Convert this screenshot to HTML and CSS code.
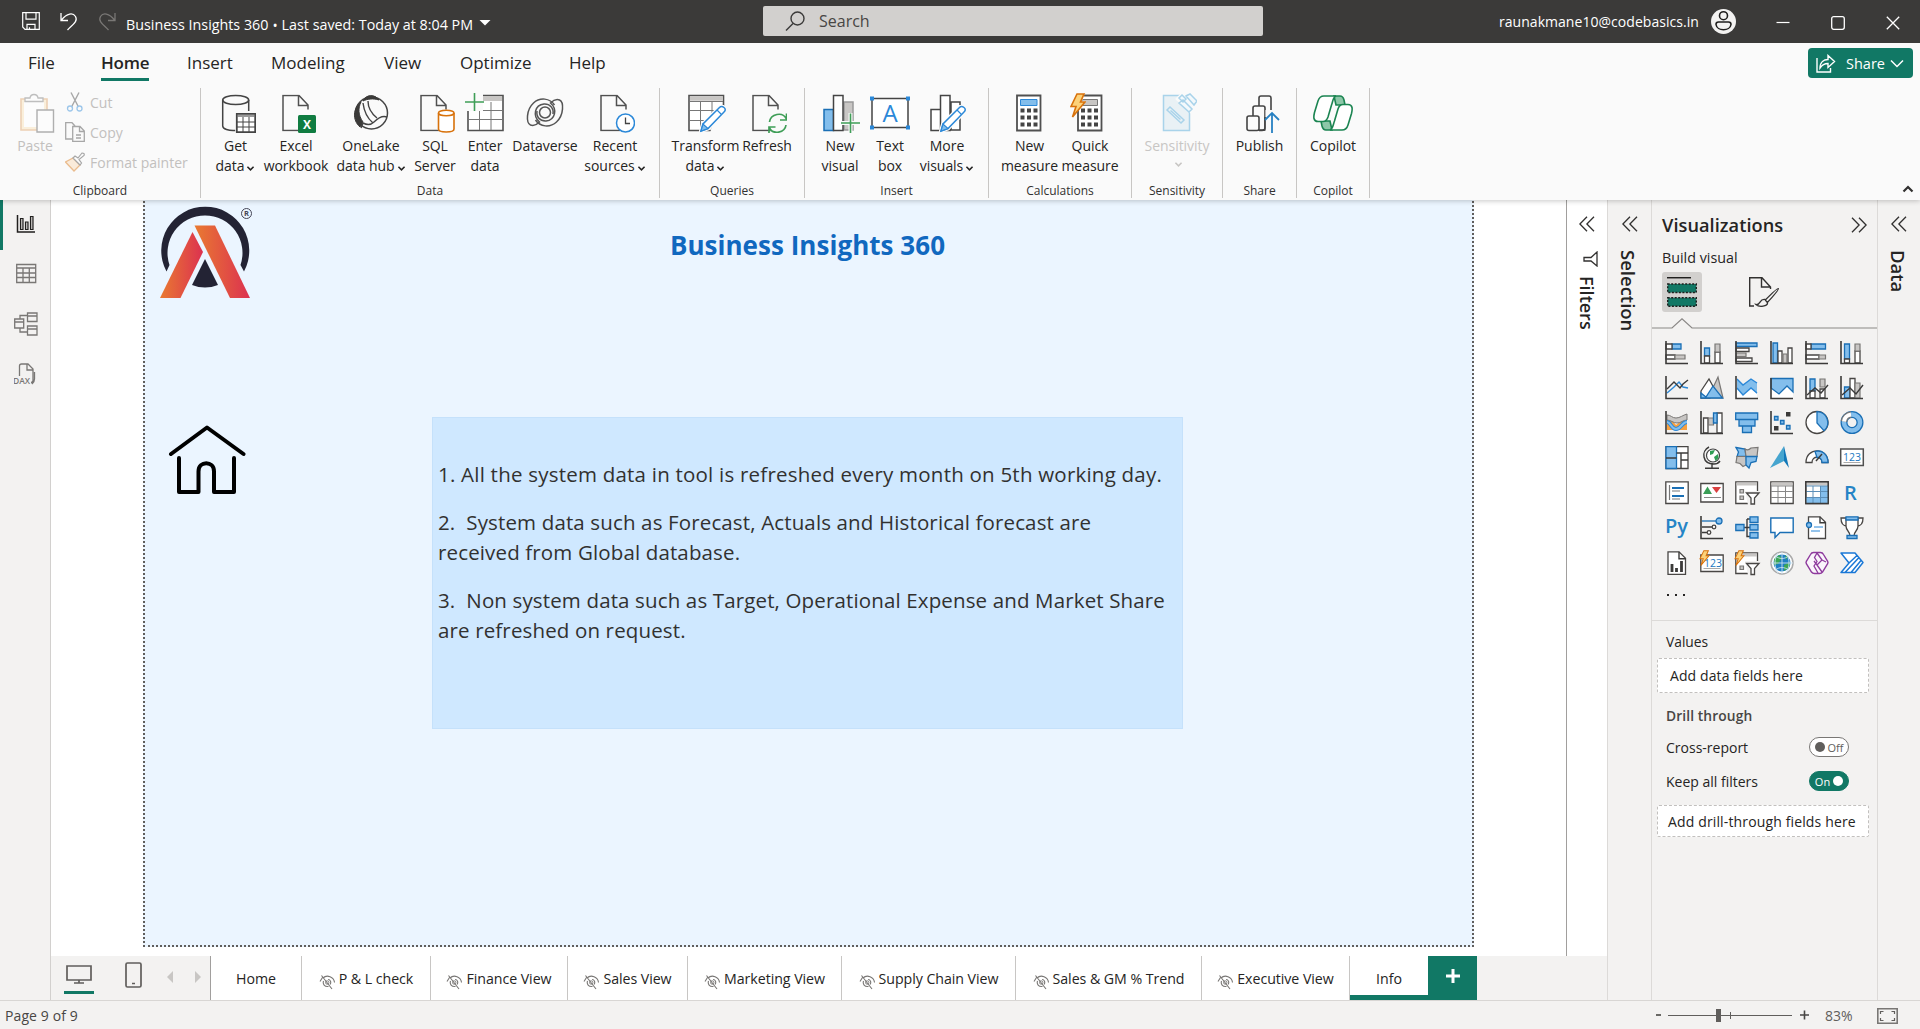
FILE: index.html
```html
<!DOCTYPE html>
<html lang="en">
<head>
<meta charset="utf-8">
<title>Business Insights 360</title>
<link rel="stylesheet" href="styles.css">
</head>
<body>
<svg class="defs" width="0" height="0">
  <symbol id="chev" viewBox="0 0 10 8"><path d="M1.500 2 5 5.500 8.500 2" fill="none" stroke="currentColor" stroke-width="1.800"/></symbol>
  <symbol id="dbl" viewBox="0 0 16 16"><path d="M8 .8.9 8 8 15.200M15 .8 7.900 8 15 15.200" fill="none" stroke="#323130" stroke-width="1.300"/></symbol>
  <symbol id="eye" viewBox="0 0 16 16"><path d="M1 7.500 3.500 3.500M4 4C8 0 15 3 15.500 8.500M2.500 1.500 13 15M4.500 7c-1 3 1 6 5 5.500M9 5.500c2.500 0 3.500 3 2 5" fill="none" stroke="#797775" stroke-width="1.100"/><circle cx="8.200" cy="8.500" r="1.700" fill="none" stroke="#797775" stroke-width=".9"/></symbol>
  <symbol id="page" viewBox="0 0 28 37"><path d="M1 1h16l9 9.500V36H1z" fill="#fafafa" stroke="none"/><path d="M20 36H1V1h16l9 9.500V15M16.500 1v10H26" fill="none" stroke="#505050" stroke-width="1.500"/></symbol>
  <symbol id="pencil" viewBox="0 0 28 28"><path d="M2 26 4 19 20.500 2.500q2-2 4.500 0t0 4.500L9 23.500z" fill="#fafafa" stroke="#fafafa" stroke-width="4"/><path d="M2 26 4 19 20.500 2.500q2-2 4.500 0t0 4.500L9 23.500z" fill="#fff" stroke="#2b88d8" stroke-width="1.500"/><path d="M2 26 4 19l5 4.500zM18 5l4.500 4.500" fill="#83beec" stroke="#2b88d8" stroke-width="1.200"/></symbol>
  <symbol id="bolt" viewBox="0 0 16 25"><path d="M7 1h7l-3.500 8H15L2.500 24 6 13.500H1z" fill="#fcd27a" stroke="#d8720c" stroke-width="1.600"/></symbol>
</svg>

<header class="titlebar">
  <div class="quick">
    <svg width="18" height="18" viewBox="0 0 18 18"><path d="M.7.7h16.600v16.600H3L.7 15zM4 .7v6.500h10V.7M5 17.300v-5h8v5M7.500 17.300v-2" fill="none" stroke="#fff" stroke-width="1.200"/></svg>
    <svg width="18" height="19" viewBox="0 0 18 19"><path d="M1 1v7.500h7M1.500 8C7 1 13 .5 15.500 4.500c3 5-4 9-8 13.500" fill="none" stroke="#fff" stroke-width="1.300"/></svg>
    <svg width="18" height="19" viewBox="0 0 18 19"><path d="M17 1v7.500h-7M16.500 8C11 1 5 .5 2.500 4.500c-3 5 4 9 8 13.500" fill="none" stroke="#797775" stroke-width="1.300"/></svg>
  </div>
  <span class="doc">Business Insights 360 <b>•</b> Last saved: Today at 8:04 PM</span>
  <svg class="caret" width="12" height="6" viewBox="0 0 12 6"><path d="M.5 0h11L6 5.500z" fill="#fff"/></svg>
  <div class="search">
    <svg width="20" height="20" viewBox="0 0 20 20"><circle cx="12.500" cy="7.500" r="6.500" fill="none" stroke="#3b3a39" stroke-width="1.400"/><path d="M8 12.500 1 19.500" stroke="#3b3a39" stroke-width="1.400"/></svg>
    <span>Search</span>
  </div>
  <span class="mail">raunakmane10@codebasics.in</span>
  <svg class="avatar" width="25" height="25" viewBox="0 0 25 25"><circle cx="12.500" cy="12.500" r="12.500" fill="#f3f2f1"/><g fill="none" stroke="#201f1e" stroke-width="1.600"><circle cx="12.500" cy="6.700" r="4"/><path d="M7.500 13h10q2.500 0 2.500 2.500c-1 7-14 7-15 0Q5 13 7.500 13z"/></g></svg>
  <div class="window">
    <svg width="14" height="14" viewBox="0 0 14 14"><path d="M.5 6.500h13" stroke="#fff" stroke-width="1.200"/></svg>
    <svg width="14" height="14" viewBox="0 0 14 14"><rect x=".7" y=".7" width="12.600" height="12.600" rx="2" fill="none" stroke="#fff" stroke-width="1.300"/></svg>
    <svg width="14" height="14" viewBox="0 0 14 14"><path d="m.8.8 12.400 12.400M13.200.8.8 13.200" stroke="#fff" stroke-width="1.300"/></svg>
  </div>
</header>

<nav class="menu">
  <div class="menu-tabs"><a>File</a><a class="on"><span>Home</span></a><a>Insert</a><a>Modeling</a><a>View</a><a>Optimize</a><a>Help</a></div>
  <button class="share"><svg width="20" height="19" viewBox="0 0 20 19"><path d="M1 4v14h13.500v-4M4 14C4 8 8 5.500 12 5.500V1.500l6.500 6-6.500 6V9.500C8 9.500 6 11 4 14z" fill="none" stroke="#fff" stroke-width="1.400"/></svg><span>Share</span><svg width="14" height="9" viewBox="0 0 14 9"><path d="m1 1.500 6 6 6-6" fill="none" stroke="#fff" stroke-width="1.500"/></svg></button>
</nav>

<section class="ribbon">
  <div class="group g-clip">
    <div class="clip">
      <div class="item paste"><svg class="dim" width="40" height="40" viewBox="0 0 40 40"><path d="M6 6h26v31H6z" fill="#fbe3b6" stroke="#dd9f62" stroke-width="1.600"/><path d="M9 9h20v25H9z" fill="#fff"/><path d="M10 8V5h5q.5-3.500 4-3.500t4 3.500h5v3.500H10z" fill="#fff" stroke="#777" stroke-width="1.300"/><path d="M22 17h16.500v22H22z" fill="#fff" stroke="#555" stroke-width="1.400"/></svg><span>Paste</span></div>
      <ul>
        <li><svg class="dim" width="20" height="20" viewBox="0 0 20 20"><path d="M6 .5 13.500 15M14 .5 6.500 15" stroke="#444" stroke-width="1.400"/><circle cx="5" cy="16.500" r="2.500" fill="none" stroke="#2b88d8" stroke-width="1.300"/><circle cx="14.500" cy="16.500" r="2.500" fill="none" stroke="#2b88d8" stroke-width="1.300"/></svg>Cut</li>
        <li><svg class="dim" width="20" height="20" viewBox="0 0 20 20"><path d="M7 17H.7V.7H7L10 4M7.700 19.300V4.500H15l4.300 4.500v10.300zM14.500 4.500V9.500h5M11 13h5M11 16h5" fill="none" stroke="#444" stroke-width="1.300"/></svg>Copy</li>
        <li><svg class="dim" width="20" height="20" viewBox="0 0 20 20"><path d="m8 6 7 7-6 6-8.500-9z" fill="#fbd9b4" stroke="#d8720c" stroke-width="1.300"/><path d="m8 6 2-2 3 2 4-5q3 0 2 2.500l-5 4L16.500 11 15 13z" fill="#fff" stroke="#444" stroke-width="1.200"/></svg>Format painter</li>
      </ul>
    </div>
    <footer>Clipboard</footer>
  </div>
  <div class="group g-data">
    <div class="items">
      <div class="item"><svg width="40" height="40" viewBox="0 0 40 40"><g fill="none" stroke="#444" stroke-width="1.500"><path d="M6.700 7v26c0 3 6 5 12.500 4.500M32.700 7v11" /><ellipse cx="19.700" cy="7" rx="13" ry="4.600"/><path d="M20.700 20.700h18.600v18.600H20.700z" fill="#fff"/><path d="M20.700 22.500h18.600" stroke="#999" stroke-width="3"/><path d="M20.700 29h18.600M20.700 34h18.600M27 24v15M33 24v15" stroke-width="1"/><path d="M20.700 20.700h18.600v18.600H20.700z"/></g></svg><span>Get</span><span>data<svg class="dd"><use href="#chev"/></svg></span></div>
      <div class="item"><svg width="40" height="40" viewBox="0 0 40 40"><use href="#page" x="6" y="1.500" width="28" height="37"/><rect x="22" y="22" width="18" height="18" rx="1.500" fill="#107c41"/><text x="31" y="36" class="xl">X</text></svg><span>Excel</span><span>workbook</span></div>
      <div class="item"><svg width="40" height="40" viewBox="0 0 40 40"><circle cx="20.500" cy="20" r="16" fill="none" stroke="#444" stroke-width="1.500"/><path d="M12 8C15 1 24 1 28 7 22 5 16 6 12 8zM10 9c-8 6-9 18-1 25l3-5C7 22 7 15 10 9z" fill="#3b3a39" stroke="#3b3a39"/><path d="M12 30c4 2 8 2 11-1s8-7 13-5M12 10c1 8 4 15 10 20M17 8c0 7 4 13 9 17M12 30l-2 5" fill="none" stroke="#444" stroke-width="1.400"/></svg><span>OneLake</span><span>data hub<svg class="dd"><use href="#chev"/></svg></span></div>
      <div class="item"><svg width="40" height="40" viewBox="0 0 40 40"><use href="#page" x="5" y="1.500" width="28" height="37"/><path d="M23.500 20v16c0 4 15.500 4 15.500 0V20" fill="#fff" stroke="#d8720c" stroke-width="1.600"/><ellipse cx="31.250" cy="20" rx="7.750" ry="2.800" fill="#fff" stroke="#d8720c" stroke-width="1.600"/></svg><span>SQL</span><span>Server</span></div>
      <div class="item"><svg width="40" height="40" viewBox="0 0 40 40"><path d="M3 2.500h35V37.500H3z" fill="#fff" stroke="#505050" stroke-width="1.600"/><path d="M4 5.500h33" stroke="#c8c6c4" stroke-width="5"/><path d="M4 17.500h33M4 26.500h33M14.500 9v28M26 9v28" stroke="#777"/><path d="M0 0h18v18H0z" fill="#fafafa"/><path d="M9.500 0v18M0 9h19" stroke="#3f9e57" stroke-width="1.600"/></svg><span>Enter</span><span>data</span></div>
      <div class="item"><svg width="40" height="40" viewBox="0 0 40 40"><g fill="none" stroke="#555" stroke-width="1.500"><circle cx="20" cy="19.500" r="5.500"/><path id="lobe" d="M29.500 12C25 5 15 4 8.500 10 1 17 1 30 5.500 32c4 1.500 7-1 9-3-7-6-5-17 4.500-18 6-.3 10 4 9 10"/><use href="#lobe" transform="rotate(180 20 19.500)"/></g></svg><span>Dataverse</span></div>
      <div class="item"><svg width="40" height="40" viewBox="0 0 40 40"><use href="#page" x="5" y="1.500" width="28" height="37"/><circle cx="30.500" cy="30" r="9" fill="#fff" stroke="#2b88d8" stroke-width="1.500"/><path d="M30.500 24.500v6H35" fill="none" stroke="#444" stroke-width="1.300"/></svg><span>Recent</span><span>sources <svg class="dd"><use href="#chev"/></svg></span></div>
    </div>
    <footer>Data</footer>
  </div>
  <div class="group g-query">
    <div class="items">
      <div class="item"><svg width="40" height="40" viewBox="0 0 40 40"><path d="M3 2.500h34.500V37.500H3z" fill="#fff" stroke="#505050" stroke-width="1.600"/><path d="M4 5.500h33" stroke="#c8c6c4" stroke-width="4.500"/><path d="M4 8.500h33M4 17.500h33M4 27.500h33M14.500 9v28M26 9v28" stroke="#777"/><path d="M30 20h10v20H24z" fill="#fafafa"/><use href="#pencil" x="13" y="12" width="28" height="28"/></svg><span>Transform</span><span>data<svg class="dd"><use href="#chev"/></svg></span></div>
      <div class="item"><svg width="40" height="40" viewBox="0 0 40 40"><use href="#page" x="5" y="1.500" width="28" height="37"/><circle cx="31" cy="31" r="10" fill="#fafafa"/><path d="M22.500 29c1-8 13-11 17-3M39.500 20.500V27H33M39 32c-1 8-13 10-16.500 3M22 40v-6h6.500" fill="none" stroke="#3f9e57" stroke-width="1.700"/></svg><span>Refresh</span></div>
    </div>
    <footer>Queries</footer>
  </div>
  <div class="group g-insert">
    <div class="items">
      <div class="item"><svg width="40" height="40" viewBox="0 0 40 40"><g stroke-width="1.500"><path d="M24 9h9v28h-9z" fill="#c8c6c4" stroke="#999"/><path d="M4 16.500h9.500v21H4z" fill="#83beec" stroke="#1a6fb5"/><path d="M13.500 2.500h9.500v35h-9.500z" fill="#fff" stroke="#444"/></g><path d="M21 30h19M30.500 20v20" stroke="#fafafa" stroke-width="4"/><path d="M21 30h19M30.500 20.500V40" stroke="#3f9e57" stroke-width="1.600"/></svg><span>New</span><span>visual</span></div>
      <div class="item"><svg width="40" height="40" viewBox="0 0 40 40"><path d="M2 5.500h36v29H2z" fill="#fff" stroke="#444" stroke-width="1.500"/><g fill="#2b88d8"><path d="M0 3.500h4v4H0zM36 3.500h4v4h-4zM0 32.500h4v4H0zM36 32.500h4v4h-4z"/></g><text x="20" y="29" class="tb">A</text></svg><span>Text</span><span>box</span></div>
      <div class="item"><svg width="40" height="40" viewBox="0 0 40 40"><g fill="#fff" stroke="#444" stroke-width="1.500"><path d="M24 9h9v28h-9zM4 16.500h9.500v21H4zM13.500 2.500h9.500v35h-9.500z"/></g><use href="#pencil" x="12" y="12" width="28" height="28"/></svg><span>More</span><span>visuals<svg class="dd"><use href="#chev"/></svg></span></div>
    </div>
    <footer>Insert</footer>
  </div>
  <div class="group g-calc">
    <div class="items">
      <div class="item"><svg width="40" height="40" viewBox="0 0 40 40"><path d="M7 2.500h23.500v35H7z" fill="#fff" stroke="#505050" stroke-width="1.800"/><path d="M10.500 6.500h16.500v6H10.500z" fill="#83beec" stroke="#2b88d8"/><path d="M10.500 17.500H28M10.500 24.500H28M10.500 31.500H28" stroke="#444" stroke-width="4" stroke-dasharray="4 2.500"/></svg><span>New</span><span>measure</span></div>
      <div class="item"><svg width="40" height="40" viewBox="0 0 40 40"><path d="M8 2.500h23.500v35H8z" fill="#fff" stroke="#505050" stroke-width="1.800"/><path d="M12 6.500h15.500v6H12z" fill="#c8c6c4" stroke="#777"/><path d="M11 17.500H29M11 24.500H29M11 31.500H29" stroke="#444" stroke-width="4" stroke-dasharray="4 2.500"/><path d="M0 0h15l-3 8h4L0 26z" fill="#fafafa"/><use href="#bolt" x="0" y="0" width="16" height="25"/></svg><span>Quick</span><span>measure</span></div>
    </div>
    <footer>Calculations</footer>
  </div>
  <div class="group g-sens">
    <div class="items">
      <div class="item off"><svg width="40" height="40" viewBox="0 0 40 40"><g fill="none" stroke="#a9d3ea" stroke-width="1.500"><path d="M6.500 2.500h26v35h-26z" fill="#e9f1f5"/><path d="m10 17 3-3 14 13-3 3zM13.500 17.500l10 9"/><path d="m21 6 5-5 13 12-5 5z" fill="#f3f9fc" stroke="#fafafa" stroke-width="4"/><path d="m25 2 4 4-3 3-4-4zM22 10l4-3 9 9-3 3zM29 3l4-2 7 7-3 4z" fill="#f3f9fc"/></g></svg><span>Sensitivity</span><span><svg class="dd"><use href="#chev"/></svg></span></div>
    </div>
    <footer>Sensitivity</footer>
  </div>
  <div class="group g-share">
    <div class="items">
      <div class="item"><svg width="40" height="40" viewBox="0 0 40 40"><g fill="#fafafa" stroke="#444" stroke-width="1.600"><rect x="19" y="3" width="12" height="34" rx="2"/><rect x="13" y="13" width="12" height="24" rx="2"/><rect x="7" y="23" width="12" height="14.500" rx="2"/></g><path d="M25.500 17h14v23H25.500z" fill="#fafafa"/><path d="M25 24v11q0 2.500-3 2.500h-3" fill="none" stroke="#444" stroke-width="1.600"/><path d="M32 40V20M25 27l7-7 7 7" fill="none" stroke="#2680c2" stroke-width="1.800"/></svg><span>Publish</span></div>
    </div>
    <footer>Share</footer>
  </div>
  <div class="group g-copilot">
    <div class="items">
      <div class="item"><svg width="40" height="40" viewBox="0 0 40 40"><g stroke="#1b8451" stroke-width="1.600" fill="#fff"><path d="M21 3h6q3 0 4 4l1 5h-9zM19 37h-6q-3 0-4-4l-1-5h9z" fill="#8dc7a8"/><path d="M11 3h12c-3 1-3 5-4.500 9L15 24q-1.500 4.500-5 4.500H5c-5 0-4.500-5-3.500-9L5 8q1.500-5 6-5z"/><path d="M29 37H17c3-1 3-5 4.500-9L25 16q1.500-4.500 5-4.500h5c5 0 4.500 5 3.500 9L35 32q-1.500 5-6 5z"/></g></svg><span>Copilot</span></div>
    </div>
    <footer>Copilot</footer>
  </div>
  <svg class="collapse" width="12" height="8" viewBox="0 0 12 8"><path d="m1.500 6.500 4.500-4.500 4.500 4.500" fill="none" stroke="#323130" stroke-width="2.200"/></svg>
</section>

<main>
  <aside class="rail">
    <div class="on"><svg width="24" height="24" viewBox="0 0 24 24"><path d="M3.500 3v17H21" fill="none" stroke="#201f1e" stroke-width="1.500"/><path d="M6.500 6.500H9v11H6.500zM11.500 10H14v7.500h-2.500zM16.500 4.500H19v13h-2.500z" fill="#c8c6c4" stroke="#201f1e" stroke-width="1.200"/></svg></div>
    <div><svg width="24" height="24" viewBox="0 0 24 24"><path d="M2.700 2.500h19v18h-19zM2.700 6h19M2.700 11h19M2.700 15.500h19M9 6v14.500M15.300 6v14.500" fill="none" stroke="#797775" stroke-width="1.300"/></svg></div>
    <div><svg width="24" height="24" viewBox="0 0 24 24"><path d="M.7 7h9v9h-9zM.7 10h9M13.500 1H23v8.500h-9.500zM13.500 4H23M13.500 14H23v9h-9.500zM13.500 17H23M6 7V3.500h7.500M6 16v4h7.500" fill="none" stroke="#797775" stroke-width="1.300"/></svg></div>
    <div><svg width="24" height="24" viewBox="0 0 24 24"><path d="M5.500 15V4q0-2 2-2H14l5 5v12l-2 2M13 2v6h6M20.500 10v7q0 3-2.500 5" fill="none" stroke="#797775" stroke-width="1.300"/><path d="M0 14h17v9H0z" fill="#f3f2f1"/><text x="-1" y="21.500" class="dax">DAX</text></svg></div>
  </aside>

  <div class="work">
    <div class="work-top">
      <div class="stage">
        <article class="page">
          <div class="page-side">
            <svg class="logo" width="94" height="94" viewBox="0 0 94 94">
              <defs><linearGradient id="lg1"><stop stop-color="#e97a31"/><stop offset="1" stop-color="#dc3150"/></linearGradient></defs>
              <path d="M6.500 66.500A44 44 0 1 1 84 66.500L80.500 60A37.500 37.500 0 1 0 9.500 60z" fill="#232334"/>
              <path d="M32.500 27 43 47 20.500 93H0z" fill="url(#lg1)"/><path d="M34.500 20.500H55L90 93H70z" fill="url(#lg1)"/>
              <path d="M45 54 58 80q-13 5-26 0z" fill="#232334"/>
              <circle cx="86.500" cy="8.500" r="5" fill="none" stroke="#454556"/><text x="86.500" y="11.200" class="reg">R</text>
            </svg>
            <svg class="house" width="78" height="70" viewBox="0 0 78 70"><path d="M3 30 39 3.500 75.500 30M11 34v34h19.500V47.500c0-11 15.500-11 15.500 0V68h20V34" fill="none" stroke="#000" stroke-width="4" stroke-linecap="round" stroke-linejoin="round"/></svg>
          </div>
          <div class="page-main">
            <h1>Business Insights 360</h1>
            <div class="note">
              <p class="l1">1. All the system data in tool is refreshed every month on 5th working day.</p>
              <p>2.&nbsp; System data such as Forecast, Actuals and Historical forecast are<br>received from Global database.</p>
              <p>3.&nbsp; Non system data such as Target, Operational Expense and Market Share<br>are refreshed on request.</p>
            </div>
          </div>
        </article>
      </div>
      <aside class="strip filters"><svg width="16" height="16"><use href="#dbl"/></svg><svg class="funnel" width="16" height="16" viewBox="0 0 16 16"><path d="M15 1v14L9 10H2V6.500h7z" fill="none" stroke="#323130" stroke-width="1.300"/></svg><span>Filters</span></aside>
    </div>
    <div class="sheets">
      <div class="views">
        <div class="desk"><svg width="26" height="19" viewBox="0 0 26 19"><path d="M1 1h24v14H1zM13 15v3M8 18h10" fill="none" stroke="#605e5c" stroke-width="1.700"/></svg></div>
        <svg class="phone" width="17" height="26" viewBox="0 0 17 26"><rect x="1" y="1" width="15" height="24" rx="1.500" fill="none" stroke="#605e5c" stroke-width="1.700"/><path d="M7 21.500h3" stroke="#605e5c" stroke-width="1.500"/></svg>
        <svg class="prev" width="7" height="12" viewBox="0 0 7 12"><path d="M6 0v12L0 6z" fill="#c8c6c4"/></svg>
        <svg class="next" width="7" height="12" viewBox="0 0 7 12"><path d="M1 0v12l6-6z" fill="#c8c6c4"/></svg>
      </div>
      <div class="sheet s1">Home</div>
      <div class="sheet s2"><svg><use href="#eye"/></svg>P &amp; L check</div>
      <div class="sheet s3"><svg><use href="#eye"/></svg>Finance View</div>
      <div class="sheet s4"><svg><use href="#eye"/></svg>Sales View</div>
      <div class="sheet s5"><svg><use href="#eye"/></svg>Marketing View</div>
      <div class="sheet s6"><svg><use href="#eye"/></svg>Supply Chain View</div>
      <div class="sheet s7"><svg><use href="#eye"/></svg>Sales &amp; GM % Trend</div>
      <div class="sheet s8"><svg><use href="#eye"/></svg>Executive View</div>
      <div class="sheet s9 on">Info</div>
      <div class="add"><svg width="14" height="14" viewBox="0 0 14 14"><path d="M7 0v14M0 7h14" stroke="#fff" stroke-width="3"/></svg></div>
    </div>
  </div>

  <aside class="strip selection"><svg width="16" height="16"><use href="#dbl"/></svg><span>Selection</span></aside>

  <section class="viz">
    <header><h2>Visualizations</h2><svg class="flip" width="16" height="16"><use href="#dbl"/></svg></header>
    <h3>Build visual</h3>
    <div class="modes">
      <div class="mode on"><svg width="30" height="30" viewBox="0 0 30 30"><path d="M0 .7h24" stroke="#201f1e" stroke-width="1.500"/><path d="M.7 7h28.600v8.500H.7zM.7 20.700h28.600v8.500H.7z" fill="#117865" stroke="#201f1e" stroke-width="1.400" stroke-dasharray="2 1.500"/></svg></div>
      <div class="mode"><svg width="30" height="30" viewBox="0 0 30 30"><path d="M5 29H.7V.7H13L21.500 10v2M12.500.7V10h9" fill="none" stroke="#323130" stroke-width="1.400"/><path d="M29.300 11.500c-1-.7-13 11.500-13 11.500l2 2.500S30 13 29.300 11.500zM16 22.500c-6-1-4 6-9 5 3 3 12 2 11.500-2z" fill="#f3f2f1" stroke="#323130" stroke-width="1.300"/></svg></div>
    </div>
    <svg class="notch" width="225" height="11" viewBox="0 0 225 11"><path d="M0 10h20L30 .8 40 10h185" fill="none" stroke="#8a8886" stroke-width="1.200"/></svg>
    <div class="gallery">
      <svg viewBox="0 0 24 24"><path class="b" d="M7 3h9v5H7z"/><path class="w" d="M1 3h6v5H1zM1 14h9v4H1z"/><path class="g" d="M10 14h10v4H10z"/><path class="a" d="M1 0v22.500h22"/></svg>
      <svg viewBox="0 0 24 24"><path class="b" d="M4.500 7h5v8h-5z"/><path class="w" d="M4.500 15h5v7h-5zM15 11h5v11h-5z"/><path class="g" d="M15 3h5v8h-5z"/><path class="a" d="M1 0v22.500h22"/></svg>
      <svg viewBox="0 0 24 24"><path class="b" d="M1 2h21v3.500H1z"/><path class="w" d="M1 7h13v3.500H1zM1 17h16v3.500H1z"/><path class="g" d="M1 12h10v3.500H1z"/><path class="a" d="M1 0v22.500h22"/></svg>
      <svg viewBox="0 0 24 24"><path class="b" d="M3 2h4.500v20H3z"/><path class="w" d="M8 10h4v12H8zM18 7h4v15h-4z"/><path class="g" d="M13 13h4v9h-4z"/><path class="a" d="M1 0v22.500h22"/></svg>
      <svg viewBox="0 0 24 24"><path class="b" d="M6 3h14.500v5H6z"/><path class="w" d="M1 3h5v5H1zM1 14h13v4H1z"/><path class="g" d="M14 14h6.500v4H14z"/><path class="a" d="M1 0v22.500h22"/></svg>
      <svg viewBox="0 0 24 24"><path class="b" d="M4.500 3h5v15h-5z"/><path class="w" d="M4.500 18h5v4h-5zM15 10h5v12h-5z"/><path class="g" d="M15 3h5v7h-5z"/><path class="a" d="M1 0v22.500h22"/></svg>

      <svg viewBox="0 0 24 24"><path d="m2 17 7-6 5-5 4 5 5 1" class="ln bl"/><path d="m2 13 7-7 6 6 3-4 5-4" class="ln"/><path class="a" d="M1 0v22.500h22"/></svg>
      <svg viewBox="0 0 24 24"><path class="g" d="m11 16 7-15 5 21H11z"/><path class="w" d="m1 15 8-12 6 11-5 8H1z"/><path class="b" d="m1 17 5 4 7-11 9.500 12H1z"/></svg>
      <svg viewBox="0 0 24 24"><path d="m2 3 6 6 8-6 6 4v13H2z" fill="#83beec"/><path d="m2 13 6 6 8-7 6 6v4H2z" fill="#fff"/><path class="ln bl" d="m2 12 6 7 8-7 6 5M2 3l6 6 8-6 6 4"/><path class="a" d="M1 0v22.500h22"/></svg>
      <svg viewBox="0 0 24 24"><path d="M1 2.500h22v20H1z" fill="#fff"/><path class="b" d="M1 2.500h22V16l-6-6-8 8-8-6z"/><path class="a" d="M1 2v20.500h22" stroke="#777"/></svg>
      <svg viewBox="0 0 24 24"><path class="b" d="M5 3h5v12H5z"/><path class="g" d="M15 3h5v8h-5z"/><path class="w" d="M5 15h5v7H5zM15 13h5v9h-5z"/><path class="ln" d="m2 19 8-7 6 5 7-8"/><path class="a" d="M1 0v22.500h22"/></svg>
      <svg viewBox="0 0 24 24"><path class="b" d="M4.500 11H10v11H4.500z"/><path class="w" d="M10 2.500h5V22h-5z"/><path class="g" d="M15 7h5v15h-5z"/><path class="ln" d="m2 19 8-7 6 6 7-9"/><path class="a" d="M1 0v22.500h22"/></svg>

      <svg viewBox="0 0 24 24"><path d="M2 9h5l4 5 6-5h5v10H2z" fill="#f6a040"/><path d="M2 4c4 0 5 3 9 3s7-3 11-4v6c-4 0-6 3-10 3S6 9 2 9z" fill="#c8c6c4" stroke="#797775"/><path d="M2 11c4 0 4 7 9 7s6-7 11-7" fill="none" stroke="#2b88d8" stroke-width="4"/><path d="M2 11c4 0 4 7 9 7s6-7 11-7" fill="none" stroke="#83beec" stroke-width="2"/><path class="a" d="M1 0v22.500h22"/></svg>
      <svg viewBox="0 0 24 24"><path class="w" d="M3.500 7H8v15H3.500zM17 2h5v20h-5z"/><path class="g" d="M8.500 7h5v7h-5z"/><path class="b" d="M13.500 2H17v10h-3.500z"/><path class="a" d="M1 0v22.500h22"/></svg>
      <svg viewBox="0 0 24 24"><path class="b" d="M.7 2h22v6.500H.7zM4 8.500h16v6.500H4zM7.500 15h9v6.500h-9z"/></svg>
      <svg viewBox="0 0 24 24"><path fill="#3b3a39" d="M16 1h4.500v4.500H16zM4 15h4.500v4.500H4z"/><path class="b" d="M4.500 5.500H8V9H4.500zM10.500 9.500H14V13h-3.500zM16.500 14.500H20V18h-3.500z" stroke-width=".7"/><path class="a" d="M1 0v22.500h22"/></svg>
      <svg viewBox="0 0 24 24"><circle class="w" cx="12" cy="11.500" r="11"/><path class="b" d="M12 .7a10.800 10.800 0 0 1 7 19L12 12z"/></svg>
      <svg viewBox="0 0 24 24"><circle cx="12" cy="11.500" r="8" fill="none" stroke="#1a6fb5" stroke-width="7"/><circle cx="12" cy="11.500" r="8" fill="none" stroke="#83beec" stroke-width="4.500"/><path d="M4 10.500a8 8 0 0 1 7-7" fill="none" stroke="#777" stroke-width="6.500"/><path d="M4 10.500a8 8 0 0 1 7-7" fill="none" stroke="#fff" stroke-width="4"/></svg>

      <svg viewBox="0 0 24 24"><path class="w" d="M1 .7h22v21.800H1z"/><path class="b" d="M1 .7h10.500v21.800H1z"/><path d="M1 12h10.500M11.500 7H23M16 7v15.500M16 14h7" class="ln" stroke-width="1.200"/></svg>
      <svg viewBox="0 0 24 24"><circle cx="13" cy="9.500" r="6.500" fill="#fff" stroke="#444" stroke-width="1.200"/><path d="M10 5l5-1-2 4-3 1zM14 11l4-3 .5 4-3 3z" fill="#2f9e55"/><path d="M9 1c-8 4-7 17 5 17 4 0 6-3 6-3M12 18v4M5 22.300h14" class="ln" stroke-width="1.800"/></svg>
      <svg viewBox="0 0 24 24"><path class="b" d="m1 1.500 9 1.500 1 7.500H2L3.500 6z"/><path class="g" d="M10 3q3 2 6-1l7-.5-1 9H11z"/><path class="g" d="M2 10.500h9l1 8-4 2-3-3-4-1z"/><path class="b" d="M11 10.500h11l-1 5-5 1-2 5.500-3-3z"/></svg>
      <svg viewBox="0 0 24 24"><path d="M14 0 0 22l14-7z" fill="#46a5cf"/><path d="m14 0 5 22-5-7z" fill="#1278b8"/></svg>
      <svg viewBox="0 0 24 24"><path class="w" d="M1 16.500C1 1 23 1 23 16.500h-6c0-7-10-7-10 0z"/><path class="b" d="M10 5.500c7-2 13 3 13 11h-6c0-4-3-5.500-5-5z"/><path d="m17 8-6 7" class="ln" stroke-width="3"/></svg>
      <svg viewBox="0 0 24 24"><path d="M.7 3h22.600v16.500H.7z" fill="#fff" stroke="#505050" stroke-width="1.500"/><text x="12" y="14.500" class="n123">123</text><path d="M3.500 16.500h17" stroke="#aaa"/></svg>

      <svg viewBox="0 0 24 24"><path class="w" d="M.8.8h22.400v21.700H.8z"/><path d="M7 7h12M7 15h12" stroke="#1a6fb5" stroke-width="2"/><path d="M7 10h8M7 18h8M4.500 4v15" stroke="#777" stroke-width="1.200"/></svg>
      <svg viewBox="0 0 24 24"><path class="w" d="M.8 2.500h22.400v18.500H.8z"/><path d="m3 13 4.500-7.500L12 13z" fill="#3a9e57"/><path d="m12 6 4.500 6L21 6z" fill="#d93f3f"/><path d="M4 16.500h17" stroke="#888"/></svg>
      <svg viewBox="0 0 24 24"><path class="w" d="M.8.8h21.700v21.700H.8z"/><path d="M1.500 3h20.500" stroke="#c8c6c4" stroke-width="3"/><path class="g" d="M5 8.500h3.500V12H5zM5 15h3.500v3.500H5z"/><path d="M10 10h14v14H13z" fill="#f3f2f1"/><path class="w" d="M11.500 12H24l-4.500 5v6H16v-6z"/></svg>
      <svg viewBox="0 0 24 24"><path class="w" d="M.8.8h22.400v21.700H.8z"/><path d="M1.500 3h21" stroke="#c8c6c4" stroke-width="3"/><path d="M1 10.500h22M1 16.500h22M8 5v17M15.500 5v17M1 5h22" stroke="#888"/></svg>
      <svg viewBox="0 0 24 24"><path class="w" d="M.8.8h22.400v21.700H.8z"/><path d="M15.500 5H23v17H1v-5h14.500z" fill="#83beec"/><path d="M1.500 3h21" stroke="#c8c6c4" stroke-width="3"/><path d="M1 10.500h22M1 16.500h22M8 5v17M15.500 5v17M1 5h22" stroke="#5c8fb8"/><path d="M.8.8h22.400v21.700H.8z" class="ln"/></svg>
      <svg viewBox="0 0 24 24"><text x="10.500" y="19" class="lang">R</text></svg>

      <svg viewBox="0 0 24 24"><text x="11.500" y="17" class="lang">Py</text></svg>
      <svg viewBox="0 0 24 24"><path d="M2 5h14" stroke="#1a6fb5" stroke-width="1.300"/><circle class="b" cx="19" cy="5" r="3"/><path d="M2 11h10M2 16.500h5" class="ln"/><circle class="w" cx="14" cy="11" r="1.800"/><circle class="w" cx="9" cy="16.500" r="1.800"/><path class="a" d="M1 0v22.500h22"/></svg>
      <svg viewBox="0 0 24 24"><path d="M8 11.500h7M12 3v17.500h4M12 3h4" class="ln"/><path class="b" d="M.8 8.500H9v6H.8zM15 .8h8v5.500h-8zM15 8.500h8v5.500h-8zM15 16.500h8v5.500h-8z"/></svg>
      <svg viewBox="0 0 24 24"><path d="M.8 2h22.400v14.500H10l-5 5v-5H.8z" fill="#fff" stroke="#1a6fb5" stroke-width="1.400"/></svg>
      <svg viewBox="0 0 24 24"><path class="w" d="M3.500.8H15l5.500 5.500v16.200h-17z"/><path d="M15 .8v6h5.500" class="ln" stroke-width="1.200"/><path d="M9 11h9M6 15h9" stroke="#2b88d8"/><circle cx="4" cy="9" r="2.500" class="b"/></svg>
      <svg viewBox="0 0 24 24"><path class="w" d="M6 2H1c0 5 2 8 6 8M18 2h5c0 5-2 8-6 8"/><path class="w" d="M6 2h12v8c0 5-4 5-4 10h-4c0-5-4-5-4-10z"/><path class="b" d="M6 .8h12V4H6zM7 19.500h10v3H7z"/></svg>

      <svg viewBox="0 0 24 24"><path class="w" d="M3 .8h11l6.500 6.500v16H3z"/><path d="M14 .8v7h6.500" class="ln"/><path d="M7 21v-8M11.500 21v-4M16.500 21v-11" stroke="#3b3a39" stroke-width="2.800"/></svg>
      <svg viewBox="0 0 24 24"><path class="w" d="M.8 4h22.400v16.500H.8z"/><text x="13" y="15.500" class="n123">123</text><path d="M3.500 17.500h17" stroke="#aaa"/><use href="#bolt" x="-1" y="-1" width="11" height="16"/></svg>
      <svg viewBox="0 0 24 24"><path class="w" d="M.8 1.800h21.700v20.700H.8z"/><path d="M1.500 4h20.500" stroke="#c8c6c4" stroke-width="3"/><path class="g" d="M5 15h3.500v3.500H5z"/><path d="M10 10h14v14H13z" fill="#f3f2f1"/><path class="w" d="M11.500 12.500H24l-4.500 5v6H16v-6z"/><use href="#bolt" x="-1" y="-1" width="11" height="16"/></svg>
      <svg viewBox="0 0 24 24"><circle cx="12" cy="12" r="11" fill="#fff" stroke="#aaa" stroke-width="1.500"/><circle cx="12" cy="12" r="8.500" fill="#1e7fc4"/><path d="M4 8l5-4 3 3-4 6-4 1zM14 14l6-3-1 6-5 3zM15 4l3 2-2 3z" fill="#3aa655"/><path d="M12 1v22M1 12h22M5 4.500c4 4 10 4 14 0M5 19.500c4-4 10-4 14 0M8 2c-4 6-4 14 0 20M16 2c4 6 4 14 0 20" stroke="#c8e0ee" fill="none" stroke-width=".9"/></svg>
      <svg viewBox="0 0 24 24"><path d="M8.500 1.500h7q2 0 3 2l4 6.500q1 1.500 0 3l-5 8q-1 1.500-3 1.500h-5q-2 0-3-1.500L1.500 13q-1-1.500 0-3l4-6.500q1-2 3-2z" fill="#faf5fb" stroke="#8e3a9d" stroke-width="1.400"/><path d="M12 2 9.500 6.500l2.500 4-3 4.500 4 7M12 2l5 7-5 5-3-4M17 9l4 2M12 14l5 7" fill="none" stroke="#8e3a9d" stroke-width="1.300"/></svg>
      <svg viewBox="0 0 24 24"><path d="M1 2h14l8 9.500-8 10H1L9 12zM9 12 17 4.500M5 21.500 19 6.500M11 21.500l10-12" fill="#fff" stroke="#1a78d6" stroke-width="1.500" stroke-linejoin="round"/></svg>
    </div>
    <div class="more"><i></i><i></i><i></i></div>
    <div class="wells">
      <label>Values</label>
      <div class="well">Add data fields here</div>
      <h4>Drill through</h4>
      <div class="row"><span>Cross-report</span><span class="toggle"><i></i>Off</span></div>
      <div class="row"><span>Keep all filters</span><span class="toggle on">On<i></i></span></div>
      <div class="well drill">Add drill-through fields here</div>
    </div>
  </section>

  <aside class="strip data"><svg width="16" height="16"><use href="#dbl"/></svg><span>Data</span></aside>
</main>

<footer class="status">
  <span class="count">Page 9 of 9</span>
  <svg class="zoom" width="156" height="16" viewBox="0 0 156 16"><path d="M1 8h5" stroke="#484644" stroke-width="1.600"/><path d="M13 8.500h124M75.500 5v7" stroke="#605e5c" stroke-width="1"/><path d="M61 2h5v13h-5z" fill="#605e5c"/><path d="M145 8h9M149.500 3.500v9" stroke="#484644" stroke-width="1.600"/></svg>
  <span class="pct">83%</span>
  <svg class="fit" width="21" height="16" viewBox="0 0 21 16"><path d="M.8.8h19.400v14.400H.8z" fill="none" stroke="#797775" stroke-width="1.600"/><path d="M3.500 6V3.500h3M14.500 3.500h3V6M17.500 10v2.500h-3M6.500 12.500h-3V10" fill="none" stroke="#605e5c" stroke-width="1.200"/></svg>
</footer>
</body>
</html>
```
FILE: styles.css
```css
* { box-sizing: border-box; margin: 0; padding: 0; }
body {
  width: 1920px; height: 1029px; overflow: hidden;
  display: flex; flex-direction: column;
  font-family: "Open Sans", "Noto Sans", sans-serif;
  font-size: 14px; color: #252423; background: #f3f2f1;
  white-space: nowrap;
}
svg { display: block; flex: none; }
.defs { height: 0; }

/* title bar */
.titlebar { flex: none; height: 43px; background: #3b3a39; color: #fff; display: flex; align-items: center; }
.quick { display: flex; gap: 20px; margin-left: 22px; width: 104px; flex: none; }
.doc { font-size: 14.300px; letter-spacing: 0; width: 353px; padding-top: 5px; }
.doc b { font-size: 10px; vertical-align: 1px; margin: 0 1px; }
.caret { margin-top: 3px; }
.search { width: 500px; height: 30px; margin-left: 272px; background: #d2d0ce; border-radius: 2px; color: #484644; display: flex; align-items: center; gap: 14px; padding-left: 22px; font-size: 16px; margin-bottom: 1px; }
.mail { margin-left: 236px; width: 212px; font-size: 14px; letter-spacing: .04px; }
.window { display: flex; gap: 41px; margin-left: 40px; padding-top: 3px; }

/* menu */
.menu { flex: none; height: 43px; background: #fafafa; display: flex; justify-content: space-between; padding: 0 7px 0 28px; }
.menu-tabs { display: grid; grid-template-columns: 73px 86px 84px 113px 76px 109px 60px; font-size: 17px; line-height: 39px; }
.menu-tabs .on { font-weight: 600; letter-spacing: -.2px; }
.menu-tabs .on span { display: inline-block; height: 38px; border-bottom: 3px solid #117865; }
.share { width: 105px; height: 30px; margin-top: 5px; border: 0; border-radius: 4px; background: #117865; color: #fff; font: 14.500px "Open Sans", sans-serif; display: flex; align-items: center; padding-left: 8px; }
.share span { margin: 0 5px 0 10px; }

/* ribbon */
.ribbon { flex: none; height: 114px; background: #fafafa; display: flex; position: relative; z-index: 2; box-shadow: 0 1px 5px rgba(0,0,0,.22); clip-path: inset(0 0 -8px 0); padding-top: 2px; }
.group { height: 110px; border-right: 1px solid #c8c6c4; display: flex; flex-direction: column; justify-content: space-between; }
.group footer { text-align: center; font-size: 12px; line-height: 14px; color: #323130; }
.items { display: flex; justify-content: center; }
.item { display: flex; flex-direction: column; align-items: center; padding-top: 5px; font-size: 14px; line-height: 20px; letter-spacing: -.05px; }
.item > svg { margin-bottom: 3px; }
.item span { display: flex; align-items: center; }
.dd { width: 9px; height: 7px; margin: 5px 0 0 2px; }
.off { color: #c8c6c4; }
.g-clip { width: 201px; } .g-data { width: 459px; } .g-query { width: 145px; }
.g-insert { width: 184px; } .g-calc { width: 143px; } .g-sens { width: 91px; }
.g-share { width: 74px; } .g-copilot { width: 73px; }
.g-data .items { display: grid; padding-left: 4px; grid-template-columns: 61px 60px 90px 38px 62px 58px 82px; justify-content: start; }
.g-query .items { display: grid; padding-left: 10px; grid-template-columns: 71px 52px; justify-content: start; }
.g-insert .items { display: grid; padding-left: 11px; grid-template-columns: 48px 52px 62px; justify-content: start; }
.g-calc .items { display: grid; padding-left: 10px; grid-template-columns: 61px 60px; justify-content: start; }
.g-data .item, .g-query .item, .g-insert .item, .g-calc .item { width: 0; justify-self: center; }
.clip { display: flex; }
.paste { width: 40px; margin-left: 15px; }
.paste, .clip li { color: #c2c0be; }
.clip ul { list-style: none; margin-top: -1px; padding: 0 0 0 10px; }
.clip li { display: flex; gap: 5px; align-items: center; height: 30px; }
.dim { opacity: .45; }
.xl { font: bold 12px "Open Sans", sans-serif; fill: #fff; text-anchor: middle; }
.tb { font: 24px "Open Sans", sans-serif; fill: #2b88d8; text-anchor: middle; }
.collapse { position: absolute; right: 6px; bottom: 7px; }

/* body */
main { flex: 1; display: flex; min-height: 0; border-bottom: 1px solid #d8d6d4; }
.rail { width: 51px; border-right: 1px solid #d2d0ce; }
.rail div { height: 50px; padding: 12px 0 0 14px; }
.rail div.on { border-left: 3px solid #117865; padding-left: 11px; }
.dax { font: 600 8.500px "Open Sans", sans-serif; fill: #797775; }
.work { width: 1556px; display: flex; flex-direction: column; }
.work-top { height: 756px; display: flex; background: #fff; }
.stage { width: 1515px; overflow: hidden; padding-left: 92px; }
.page { width: 1331px; height: 751px; margin-top: -4px; border: 2px dotted #605e5c; background: #ebf5ff; display: flex; }
.page-side { width: 287px; padding: 7px 0 0 15px; }
.logo { margin-bottom: 125px; }
.house { margin-left: 8px; }
.reg { font: bold 7.500px "Open Sans", sans-serif; fill: #454556; text-anchor: middle; }
.page-main { width: 751px; text-align: center; }
h1 { font-size: 26px; font-weight: 700; color: #1068bf; line-height: 40px; padding-top: 27px; letter-spacing: .04px; }
.note { margin-top: 152px; height: 312px; background: #cfe8ff; border: 1px solid #c5e1fb; text-align: left; padding: 41px 5px; font-size: 20.500px; line-height: 30px; letter-spacing: .14px; color: #323130; }
.note p { margin-bottom: 18px; }
.note .l1 { letter-spacing: .22px; }

/* side strips */
.strip { display: flex; flex-direction: column; font-size: 18.500px; font-weight: 600; border-left: 1px solid #dcdad8; padding-top: 16px; align-items: center; }
.strip span { writing-mode: vertical-rl; line-height: 24px; }
.filters { width: 41px; background: #fff; border-color: #a19f9d; font-size: 18px; }
.funnel { margin: 19px 0 9px 6px; }
.selection { width: 44px; }
.selection span { margin: 18px 3px 0 0; }
.data { width: 43px; }
.data span { margin: 18px 3px 0 0; }

/* visualizations */
.viz { width: 226px; border-left: 1px solid #dcdad8; display: flex; flex-direction: column; }
.viz header { display: flex; justify-content: space-between; padding: 11px 10px 0 10px; align-items: center; height: 38px; }
.viz h2 { font-size: 18.200px; font-weight: 600; letter-spacing: .05px; }
.flip { transform: scaleX(-1); }
.viz h3 { font-size: 14.300px; font-weight: 500; line-height: 20px; margin: 10px 0 4px 10px; }
.modes { display: flex; gap: 42px; padding-left: 10px; }
.mode { width: 40px; height: 40px; padding: 5px; border-radius: 3px; }
.mode.on { background: #d2d0ce; }
.notch { margin-top: 6px; }
.gallery { display: grid; grid-template-columns: repeat(6, 35px); grid-auto-rows: 35px; padding: 12px 0 0 13px; }
.gallery svg { width: 24px; height: 24px; overflow: visible; }
.b { fill: #83beec; stroke: #1a6fb5; stroke-width: 1.300; }
.g { fill: #c8c6c4; stroke: #797775; stroke-width: 1.200; }
.w { fill: #fff; stroke: #484644; stroke-width: 1.300; }
.a { fill: none; stroke: #3b3a39; stroke-width: 1.600; }
.ln { fill: none; stroke: #3b3a39; stroke-width: 1.400; }
.bl { stroke: #2b88d8; }
.n123 { font: 10.500px "Open Sans", sans-serif; fill: #1a78c2; text-anchor: middle; }
.lang { font: 600 20px "Open Sans", sans-serif; fill: #2584c6; text-anchor: middle; }
.more { display: flex; gap: 6px; padding: 8px 0 24px 15px; }
.more i { width: 2px; height: 2px; background: #252423; }
.wells { border-top: 1px solid #dcdad8; padding: 11px 8px 0 5px; }
.wells label { display: block; padding-left: 9px; line-height: 20px; margin-bottom: 6px; font-size: 13.800px; }
.well { height: 35px; border: 1px dashed #c2c0be; border-radius: 2px; background: #fff; line-height: 33px; padding-left: 12px; font-size: 14px; letter-spacing: .1px; }
.drill { height: 32px; line-height: 31px; padding-left: 10px; margin-top: 7px; letter-spacing: .14px; }
.wells h4 { font-weight: 600; font-size: 13.800px; letter-spacing: .1px; color: #484644; line-height: 20px; margin: 13px 0 4px 9px; }
.row { display: flex; justify-content: space-between; align-items: center; padding: 0 20px 0 9px; height: 34px; font-size: 14px; }
.toggle { width: 40px; height: 20px; border: 1px solid #797775; border-radius: 10px; background: #fff; font-size: 11px; color: #605e5c; display: flex; align-items: center; justify-content: center; gap: 3px; }
.toggle i { width: 10px; height: 10px; border-radius: 50%; background: #605e5c; }
.toggle.on { background: #117865; border-color: #117865; color: #fff; }
.toggle.on i { background: #fff; }

/* sheet tabs */
.sheets { height: 44px; display: flex; }
.views { width: 160px; border-right: 1px solid #a19f9d; display: flex; align-items: flex-start; }
.desk { margin: 9px 0 0 13px; padding: 0 2px; width: 30px; height: 29px; border-bottom: 3px solid #117865; }
.phone { margin: 6px 0 0 31px; }
.prev { margin: 15px 0 0 25px; }
.next { margin: 15px 0 0 20px; }
.sheet { background: #fff; border-right: 1px solid #c8c6c4; display: flex; align-items: center; justify-content: center; font-size: 14.200px; letter-spacing: -.05px; gap: 4px; }
.sheet svg { width: 16px; height: 16px; margin-top: 8px; }
.s1 { width: 91px; } .s2 { width: 129px; } .s3 { width: 137px; } .s4 { width: 120px; } .s5 { width: 154px; }
.s6 { width: 174px; } .s7 { width: 186px; } .s8 { width: 148px; } .s9 { width: 78px; }
.s9.on { border-right: 0; border-bottom: 5px solid #117865; padding-top: 5px; font-weight: 500; }
.add { width: 49px; background: #117865; display: flex; align-items: center; justify-content: center; padding-bottom: 4px; }

/* status */
.status { flex: none; height: 28px; display: flex; align-items: center; color: #484644; }
.count { padding: 1px 0 0 5px; width: 1655px; letter-spacing: .1px; }
.pct { margin-left: 14px; width: 52px; font-size: 14px; color: #605e5c; }
.fit { margin-top: 2px; }
```
